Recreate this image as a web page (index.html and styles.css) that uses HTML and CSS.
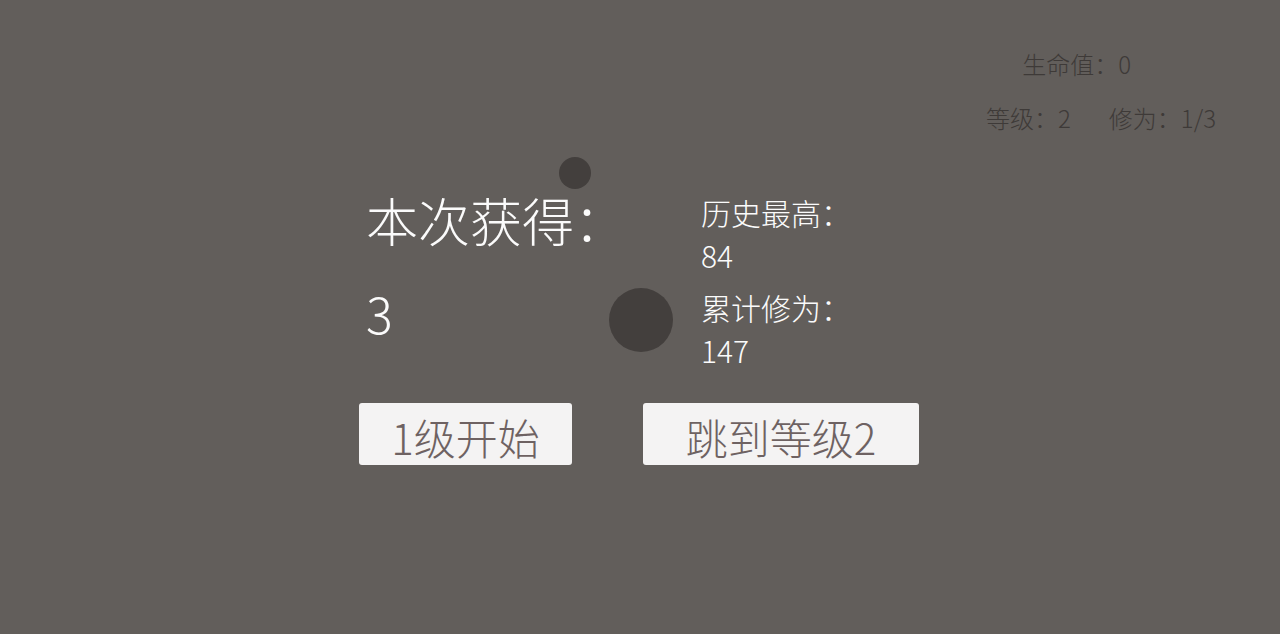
FILE: index.html
```html
<!DOCTYPE html>
<html lang="zh-CN">
<head>
    <meta charset="UTF-8">
    <meta name="viewport" content="width=device-width, initial-scale=1.0">
    <title>修为</title>
    <link rel="stylesheet" href="styles.css">
</head>
<body>
<div class="screen">
    <!-- game objects -->
    <div class="ball ball-small"></div>
    <div class="ball ball-big"></div>

    <div class="hud">
        <div class="hud-life">生命值：<span id="life">0</span></div>
        <div class="hud-row">
            <span>等级：<span id="level">2</span></span>
            <span>修为：<span id="exp">1/3</span></span>
        </div>
    </div>

    <div class="result">
        <div class="result-top">
            <div class="result-main">
                <div class="result-title">本次获得：</div>
                <div class="result-score">3</div>
            </div>
            <div class="result-side">
                <div class="stat">
                    <div>历史最高：</div>
                    <div>84</div>
                </div>
                <div class="stat">
                    <div>累计修为：</div>
                    <div>147</div>
                </div>
            </div>
        </div>
        <div class="actions">
            <button class="btn btn-start">1级开始</button>
            <button class="btn btn-jump">跳到等级2</button>
        </div>
    </div>
</div>
</body>
</html>
```

FILE: styles.css
```css
body {
    margin: 0;
    background: #625e5b;
    font-family: "Noto Sans CJK SC", "Noto Sans", sans-serif;
    font-weight: 300;
}
.screen {
    position: relative;
    width: 1280px;
    height: 634px;
    overflow: hidden;
}
.ball {
    position: absolute;
    border-radius: 50%;
    background: #433f3d;
}
.ball-small {
    left: 559px;
    top: 157px;
    width: 32px;
    height: 32px;
}
.ball-big {
    left: 609px;
    top: 288px;
    width: 64px;
    height: 64px;
}
.hud {
    display: flex;
    flex-direction: column;
    align-items: flex-end;
    gap: 22px;
    padding: 48px 64px 0 0;
    color: #3e3a38;
    font-size: 24px;
    line-height: 32px;
}
.hud-life {
    margin-right: 85px;
}
.hud-row {
    display: flex;
    gap: 38px;
}
.result {
    position: relative;
    margin: 55px 0 0 359px;
    width: 560px;
}
.result-top {
    display: flex;
    color: #fbfbfb;
}
.result-main {
    width: 342px;
    padding-left: 7px;
    box-sizing: border-box;
}
.result-title {
    font-size: 52px;
    line-height: 62px;
}
.result-score {
    font-size: 50px;
    line-height: 62px;
    margin-top: 30px;
}
.result-side {
    display: flex;
    flex-direction: column;
    gap: 9px;
    font-size: 30px;
    line-height: 43px;
    padding-top: 2px;
}
.actions {
    display: flex;
    gap: 71px;
    margin-top: 31px;
}
.btn {
    height: 62px;
    border: none;
    border-radius: 3px;
    background: #f4f3f3;
    color: #6e6262;
    font-family: inherit;
    font-weight: 300;
    font-size: 42px;
    padding: 6px 0 0;
    line-height: 50px;
}
.btn-start {
    width: 213px;
}
.btn-jump {
    width: 276px;
}
```
